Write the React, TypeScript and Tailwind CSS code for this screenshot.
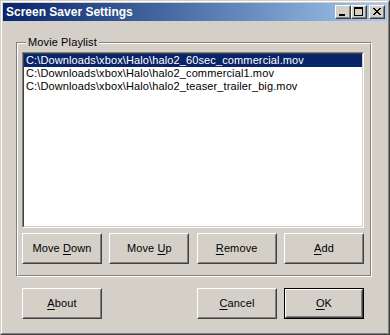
const FILES = [
  "C:\\Downloads\\xbox\\Halo\\halo2_60sec_commercial.mov",
  "C:\\Downloads\\xbox\\Halo\\halo2_commercial1.mov",
  "C:\\Downloads\\xbox\\Halo\\halo2_teaser_trailer_big.mov",
];

const FONT = { fontFamily: '"Liberation Sans", Arial, sans-serif' };

function Raised({ children, className = "" }: { children: React.ReactNode; className?: string }) {
  return (
    <div className={`border border-t-white border-l-white border-r-[#404040] border-b-[#404040] ${className}`}>
      <div className="w-full h-full border border-t-[#d4d0c8] border-l-[#d4d0c8] border-r-[#808080] border-b-[#808080] bg-[#d4d0c8]">
        {children}
      </div>
    </div>
  );
}

function Button({ pre = "", acc, post = "", isDefault = false }: { pre?: string; acc: string; post?: string; isDefault?: boolean }) {
  const face = (
    <Raised className="w-full h-full">
      <div className="flex h-full items-center justify-center text-[11px] tracking-[0.12px] text-black">
        <span>
          {pre}
          <span className="underline underline-offset-2">{acc}</span>
          {post}
        </span>
      </div>
    </Raised>
  );
  if (isDefault) {
    return <div className="w-[80px] h-[31px] border border-black">{face}</div>;
  }
  return <div className="w-[80px] h-[31px]">{face}</div>;
}

function TitleButton({ children }: { children: React.ReactNode }) {
  return (
    <Raised className="w-[16px] h-[14px]">
      <svg width="12" height="10" viewBox="0 0 12 10" shapeRendering="crispEdges">
        {children}
      </svg>
    </Raised>
  );
}

const CLOSE_ROWS = ["xx....xx", ".xx..xx.", "..xxxx..", "...xx...", "..xxxx..", ".xx..xx.", "xx....xx"];

export default function App() {
  return (
    <div style={FONT} className="w-[390px] h-[335px] bg-[#d4d0c8] border border-t-[#d4d0c8] border-l-[#d4d0c8] border-r-[#404040] border-b-[#404040]">
      <div className="w-full h-full border border-t-white border-l-white border-r-[#808080] border-b-[#808080] p-px flex flex-col">
        {/* title bar */}
        <div className="h-[18px] flex items-center bg-gradient-to-r from-[#0a246a] to-[#a6caf0] pl-[3px] pr-[2px]">
          <span className="text-white font-bold text-[12px] leading-none">Screen Saver Settings</span>
          <div className="ml-auto flex items-center">
            <TitleButton>
              <rect x="2" y="7" width="6" height="2" fill="black" />
            </TitleButton>
            <TitleButton>
              <rect x="1" y="0" width="9" height="2" fill="black" />
              <rect x="1" y="2" width="1" height="7" fill="black" />
              <rect x="9" y="2" width="1" height="7" fill="black" />
              <rect x="1" y="8" width="9" height="1" fill="black" />
            </TitleButton>
            <div className="ml-[2px]">
              <TitleButton>
                {CLOSE_ROWS.map((row, y) =>
                  row.split("").map((c, x) =>
                    c === "x" ? <rect key={`${x}-${y}`} x={x + 2} y={y + 1} width="1" height="1" fill="black" /> : null
                  )
                )}
              </TitleButton>
            </div>
          </div>
        </div>

        {/* client area */}
        <div className="flex-1 mt-px text-[11px] tracking-[0.12px] text-black">
          <div className="relative ml-[13px] mt-[20px] w-[356px] border border-t-[#808080] border-l-[#808080] border-r-white border-b-white">
            <div className="border border-t-white border-l-white border-r-[#808080] border-b-[#808080] pl-[4px] pt-[8px] pb-[11px]">
              <div className="w-[342px] h-[176px] border border-t-[#808080] border-l-[#808080] border-r-white border-b-white">
                <div className="w-full h-full border border-t-[#404040] border-l-[#404040] border-r-[#d4d0c8] border-b-[#d4d0c8] bg-white">
                  {FILES.map((f, i) => (
                    <div
                      key={f}
                      className={`h-[13px] leading-[13px] pl-[2px] whitespace-nowrap ${i === 0 ? "bg-[#0a246a] text-white" : "text-black"}`}
                    >
                      {f}
                    </div>
                  ))}
                </div>
              </div>
              <div className="mt-[5px] w-[342px] flex justify-between">
                <Button pre="Move " acc="D" post="own" />
                <Button pre="Move " acc="U" post="p" />
                <Button acc="R" post="emove" />
                <Button acc="A" post="dd" />
              </div>
            </div>
            <span className="absolute left-[9px] -top-[7px] px-[2px] leading-[13px] bg-[#d4d0c8]">Movie Playlist</span>
          </div>

          <div className="mt-[11px] ml-[19px] w-[342px] flex">
            <Button acc="A" post="bout" />
            <div className="ml-auto flex gap-[7px]">
              <Button acc="C" post="ancel" />
              <Button acc="O" post="K" isDefault />
            </div>
          </div>
        </div>
      </div>
    </div>
  );
}
